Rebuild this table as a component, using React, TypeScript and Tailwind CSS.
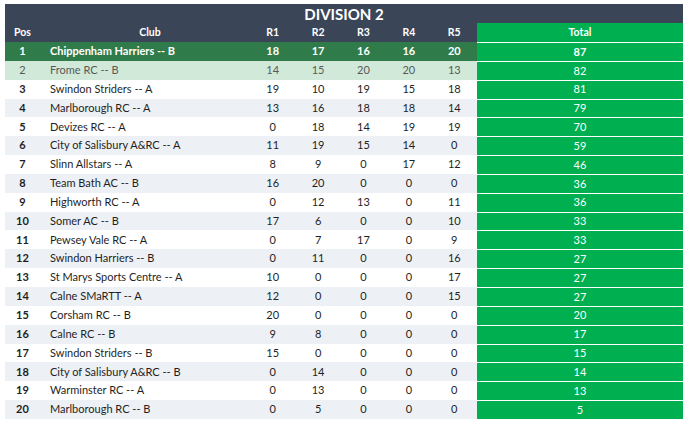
import React from "react";

type Row = { club: string; r: number[]; total: number };

const rows: Row[] = [
  { club: "Chippenham Harriers -- B", r: [18, 17, 16, 16, 20], total: 87 },
  { club: "Frome RC -- B", r: [14, 15, 20, 20, 13], total: 82 },
  { club: "Swindon Striders -- A", r: [19, 10, 19, 15, 18], total: 81 },
  { club: "Marlborough RC -- A", r: [13, 16, 18, 18, 14], total: 79 },
  { club: "Devizes RC -- A", r: [0, 18, 14, 19, 19], total: 70 },
  { club: "City of Salisbury A&RC -- A", r: [11, 19, 15, 14, 0], total: 59 },
  { club: "Slinn Allstars -- A", r: [8, 9, 0, 17, 12], total: 46 },
  { club: "Team Bath AC -- B", r: [16, 20, 0, 0, 0], total: 36 },
  { club: "Highworth RC -- A", r: [0, 12, 13, 0, 11], total: 36 },
  { club: "Somer AC -- B", r: [17, 6, 0, 0, 10], total: 33 },
  { club: "Pewsey Vale RC -- A", r: [0, 7, 17, 0, 9], total: 33 },
  { club: "Swindon Harriers -- B", r: [0, 11, 0, 0, 16], total: 27 },
  { club: "St Marys Sports Centre -- A", r: [10, 0, 0, 0, 17], total: 27 },
  { club: "Calne SMaRTT -- A", r: [12, 0, 0, 0, 15], total: 27 },
  { club: "Corsham RC -- B", r: [20, 0, 0, 0, 0], total: 20 },
  { club: "Calne RC -- B", r: [9, 8, 0, 0, 0], total: 17 },
  { club: "Swindon Striders -- B", r: [15, 0, 0, 0, 0], total: 15 },
  { club: "City of Salisbury A&RC -- B", r: [0, 14, 0, 0, 0], total: 14 },
  { club: "Warminster RC -- A", r: [0, 13, 0, 0, 0], total: 13 },
  { club: "Marlborough RC -- B", r: [0, 5, 0, 0, 0], total: 5 },
];

const cols = "grid grid-cols-[35px_210px_45.4px_45.4px_45.4px_45.4px_45.4px_1fr]";

export default function App() {
  return (
    <div
      className="w-[688px] h-[422px] bg-white pt-[4px] px-[5px] text-[11px] text-[#1f1f1f] overflow-hidden"
      style={{ fontFamily: "Lato, 'Liberation Sans', sans-serif" }}
    >
      {/* Title */}
      <div className="h-[19px] bg-[#3a4558] flex items-center justify-center text-white font-bold text-[15px] leading-none pt-[2px]">
        DIVISION 2
      </div>

      {/* Column headers */}
      <div className={`${cols} h-[19px] bg-[#3a4558] text-white font-bold text-[10.5px]`}>
        <div className="flex items-center justify-center">Pos</div>
        <div className="flex items-center justify-center pl-[10px]">Club</div>
        {["R1", "R2", "R3", "R4", "R5"].map((h) => (
          <div key={h} className="flex items-center justify-center">{h}</div>
        ))}
        <div className="flex items-center justify-center bg-[#00b050]">Total</div>
      </div>

      {/* Rows */}
      {rows.map((row, i) => {
        const pos = i + 1;
        const first = pos === 1;
        const second = pos === 2;
        const bg = first
          ? "bg-[#2f7c4a] text-white font-bold"
          : second
          ? "bg-[#d0e9d8] text-[#595959]"
          : pos % 2 === 0
          ? "bg-[#edf0f5]"
          : "bg-white";
        return (
          <div key={pos} className={`${cols} h-[18.85px] ${bg}`}>
            <div className={`flex items-center justify-center ${second ? "" : "font-bold"}`}>{pos}</div>
            <div className="flex items-center pl-[10px] whitespace-nowrap">{row.club}</div>
            {row.r.map((v, j) => (
              <div key={j} className="flex items-center justify-center">{v}</div>
            ))}
            <div
              className={`flex items-center justify-center bg-[#00b050] border-t border-white text-white ${
                first ? "font-bold" : "font-normal"
              }`}
            >
              {row.total}
            </div>
          </div>
        );
      })}
    </div>
  );
}
